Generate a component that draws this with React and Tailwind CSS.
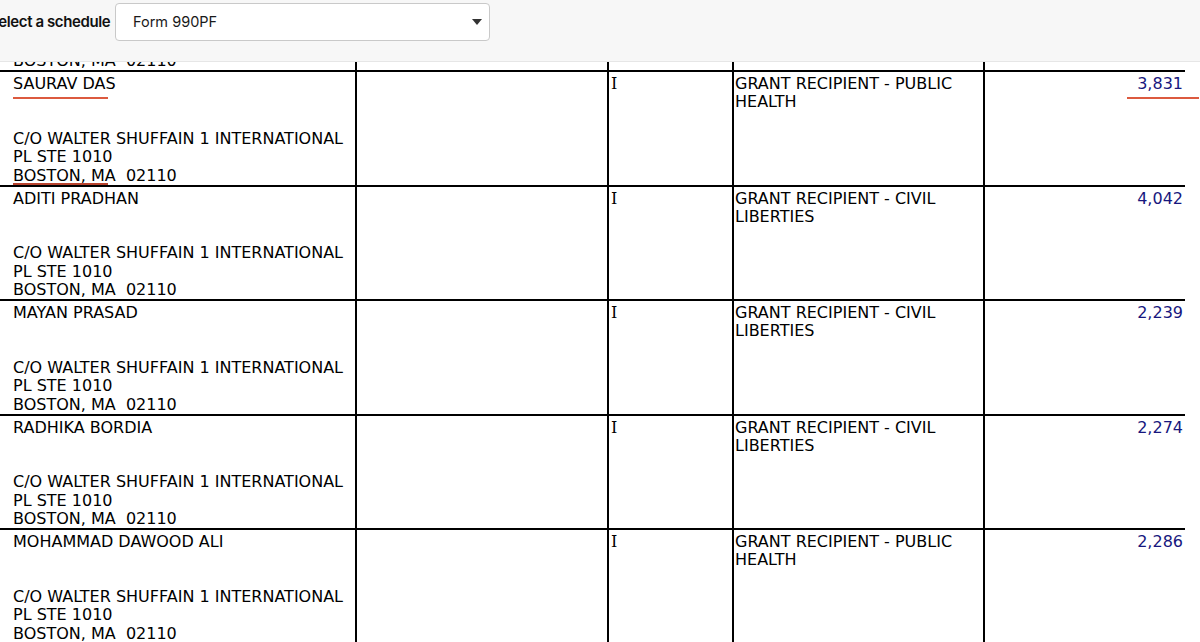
const rows = [
  { name: 'HIDDEN ROW', purpose: ['GRANT RECIPIENT - PUBLIC', 'HEALTH'], amount: '0' },
  { name: 'SAURAV DAS', purpose: ['GRANT RECIPIENT - PUBLIC', 'HEALTH'], amount: '3,831', marked: true },
  { name: 'ADITI PRADHAN', purpose: ['GRANT RECIPIENT - CIVIL', 'LIBERTIES'], amount: '4,042' },
  { name: 'MAYAN PRASAD', purpose: ['GRANT RECIPIENT - CIVIL', 'LIBERTIES'], amount: '2,239' },
  { name: 'RADHIKA BORDIA', purpose: ['GRANT RECIPIENT - CIVIL', 'LIBERTIES'], amount: '2,274' },
  { name: 'MOHAMMAD DAWOOD ALI', purpose: ['GRANT RECIPIENT - PUBLIC', 'HEALTH'], amount: '2,286' },
]

function Line({ children }) {
  return <div className="h-[18.33px] whitespace-nowrap">{children}</div>
}

function RecipientRow({ row }) {
  return (
    <div className="grid h-[114.5px] w-[1185px] grid-cols-[357px_252px_125px_251px_200px] border-t-2 border-black">
      <div className="relative border-r-2 border-black pl-[13px] pt-[3px]">
        <Line>{row.name}</Line>
        <Line>{'\u00a0'}</Line>
        <Line>{'\u00a0'}</Line>
        <Line>C/O WALTER SHUFFAIN 1 INTERNATIONAL</Line>
        <Line>PL STE 1010</Line>
        <Line>BOSTON, MA&nbsp;&nbsp;02110</Line>
        {row.marked ? (
          <>
            <span className="absolute left-[13px] top-[25px] h-[2px] w-[95px] bg-[#dc5a3f]" />
            <span className="absolute left-[13px] top-[111px] h-[2px] w-[95px] bg-[#b8432e]" />
          </>
        ) : null}
      </div>
      <div className="border-r-2 border-black" />
      <div className="border-r-2 border-black pl-[2px] pt-[3px] font-['DejaVu_Serif',serif]">
        <Line>I</Line>
      </div>
      <div className="border-r-2 border-black pl-[1px] pt-[3px]">
        {row.purpose.map((text) => (
          <Line key={text}>{text}</Line>
        ))}
      </div>
      <div className="relative pr-[2px] pt-[3px] text-right text-[#17177e]">
        <Line>{row.amount}</Line>
        {row.marked ? (
          <span className="absolute left-[142px] top-[25px] h-[2px] w-[72px] bg-[#dc5a3f]" />
        ) : null}
      </div>
    </div>
  )
}

export default function App() {
  return (
    <div className="flex h-[642px] w-[1200px] flex-col overflow-hidden bg-white">
      <header className="flex h-[62px] shrink-0 items-start border-b border-[#e6e6e6] bg-[#f7f7f7] font-['Inter',sans-serif]">
        <div className="flex h-[44px] items-center">
          <span className="-ml-[11px] w-[126px] text-[15px] font-semibold tracking-[-0.4px] text-[#111]">
            Select a schedule
          </span>
          <div className="flex h-[38px] w-[375px] items-center justify-between rounded-[4px] border border-[#c9c9c9] bg-white pl-[17px] pr-[7px]">
            <span className="text-[14.5px] text-[#1a1a1a]">Form 990PF</span>
            <svg width="10" height="6" viewBox="0 0 10 6">
              <path d="M0 0 L10 0 L5 6 Z" fill="#333" />
            </svg>
          </div>
        </div>
      </header>
      <div className="flex-1 overflow-hidden">
        <div className="-mt-[106.5px] font-['DejaVu_Sans',sans-serif] text-[16px] leading-[18.33px] text-black">
          {rows.map((row, index) => (
            <RecipientRow key={index} row={row} />
          ))}
        </div>
      </div>
    </div>
  )
}
